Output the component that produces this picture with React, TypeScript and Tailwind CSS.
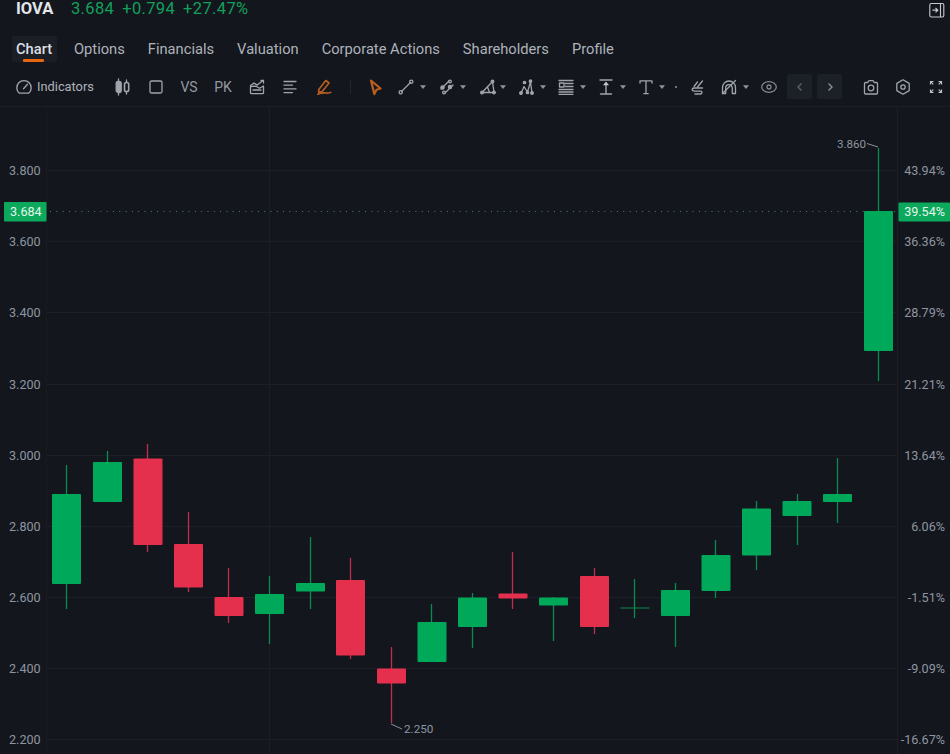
import React from "react";

const G = "#00a85a";
const R = "#e4304c";
const GW = "#0b8a50";
const RW = "#c02e49";

const candles: { c: number; x: number; t: number; b: number; wt: number; wb: number; up: boolean; thin?: boolean }[] = [
  { c: 66.5, x: 52, t: 494, b: 584, wt: 465, wb: 609, up: true },
  { c: 107.5, x: 93, t: 462, b: 502, wt: 451, wb: 502, up: true },
  { c: 147.5, x: 133.5, t: 458.5, b: 545, wt: 444, wb: 552, up: false },
  { c: 188.5, x: 174, t: 544, b: 587.5, wt: 512, wb: 592, up: false },
  { c: 228.5, x: 214.5, t: 597, b: 616, wt: 568, wb: 623, up: false },
  { c: 269.5, x: 255, t: 594, b: 614, wt: 576, wb: 644, up: true },
  { c: 310.5, x: 296, t: 583, b: 591.5, wt: 537, wb: 609, up: true },
  { c: 350.5, x: 336, t: 580, b: 655.5, wt: 558, wb: 659, up: false },
  { c: 391.5, x: 377, t: 668.5, b: 683.5, wt: 647, wb: 723, up: false },
  { c: 431.5, x: 417.5, t: 622, b: 662, wt: 604, wb: 662, up: true },
  { c: 472.5, x: 458, t: 597.5, b: 627, wt: 593, wb: 648, up: true },
  { c: 512.5, x: 498.5, t: 593.5, b: 598.5, wt: 552, wb: 609, up: false },
  { c: 553.5, x: 539, t: 597.5, b: 605.5, wt: 597, wb: 641, up: true },
  { c: 594.5, x: 580, t: 576, b: 627, wt: 568, wb: 634, up: false },
  { c: 634.5, x: 620.5, t: 607.5, b: 608.5, wt: 579, wb: 618, up: true, thin: true },
  { c: 675.5, x: 661, t: 590, b: 616, wt: 583, wb: 647, up: true },
  { c: 715.5, x: 701.5, t: 555, b: 591, wt: 540, wb: 598, up: true },
  { c: 756.5, x: 742, t: 508.5, b: 555.5, wt: 501, wb: 570, up: true },
  { c: 797.5, x: 782.5, t: 501, b: 516, wt: 494, wb: 545, up: true },
  { c: 837.5, x: 823, t: 494, b: 502, wt: 458, wb: 523, up: true },
  { c: 878.5, x: 864, t: 211, b: 351, wt: 148, wb: 381, up: true },
];

const leftAxis: [string, number][] = [
  ["3.800", 171], ["3.600", 242], ["3.400", 313], ["3.200", 385], ["3.000", 456],
  ["2.800", 527], ["2.600", 598], ["2.400", 669], ["2.200", 740],
];
const rightAxis: [string, number][] = [
  ["43.94%", 171], ["36.36%", 242], ["28.79%", 313], ["21.21%", 385], ["13.64%", 456],
  ["6.06%", 527], ["-1.51%", 598], ["-9.09%", 669], ["-16.67%", 740],
];

function Ic({ className, children, orange }: { className: string; children: React.ReactNode; orange?: boolean }) {
  return (
    <svg
      viewBox="0 0 18 18"
      fill="none"
      stroke={orange ? "#bb5f20" : "#a0a5ad"}
      strokeWidth={1.3}
      strokeLinecap="round"
      strokeLinejoin="round"
      className={className}
    >
      {children}
    </svg>
  );
}

function Caret({ className }: { className: string }) {
  return (
    <svg viewBox="0 0 8 6" className={className}>
      <path d="M1 1.2h6L4 5z" fill="#8f949d" />
    </svg>
  );
}

const base = "w-[18px] h-[18px] flex-none";
const car = "w-[8px] h-[6px] flex-none";

export default function App() {
  const tabs = ["Options", "Financials", "Valuation", "Corporate Actions", "Shareholders", "Profile"];
  return (
    <div className="w-[950px] h-[754px] overflow-hidden bg-[#13161d] font-['Roboto',sans-serif] flex flex-col">
      {/* Title row */}
      <div className="h-[19px] flex items-center pl-[16px] pr-[5px] flex-none">
        <span className="text-[16.5px] font-bold text-[#e2e5ea] w-[55px] leading-none">IOVA</span>
        <div className="flex gap-[8px] text-[16.5px] text-[#12a05c] leading-none tracking-[0.35px]">
          <span>3.684</span>
          <span>+0.794</span>
          <span>+27.47%</span>
        </div>
        <svg viewBox="0 0 16 16" fill="none" className="w-[16px] h-[16px] ml-auto" stroke="#c6cad0" strokeWidth={1.1}>
          <rect x="0.8" y="1.5" width="14" height="13.5" rx="1.5" />
          <path d="M11.5 1.5v13.5" />
          <path d="M3.5 8.2h5M6.5 6l2.3 2.2-2.3 2.2" strokeWidth={1.2} />
        </svg>
      </div>

      {/* Tabs */}
      <div className="mt-[17px] pl-[12px] h-[26px] flex items-stretch gap-[15px] text-[14.7px] text-[#aeb3bb] flex-none">
        <div className="relative px-[4px] mr-[-2px] pt-[1px] flex items-center font-medium text-[#dcdfe4] bg-[#1b1e25] rounded-[2px] w-[45px]">
          Chart
          <span className="absolute left-[11px] bottom-0 w-[21px] h-[3px] bg-[#e8670f] rounded-[1px]" />
        </div>
        {tabs.map((t) => (
          <div key={t} className="px-[4px] pt-[1px] flex items-center whitespace-nowrap">
            {t}
          </div>
        ))}
      </div>

      {/* Toolbar */}
      <div className="mt-[12px] h-[25px] flex items-center pl-[15px] flex-none text-[#a0a5ad]">
        <Ic className={base}>
          <path d="M4.3 15.2a7.2 7.2 0 1 1 9.4 0z" />
          <path d="M8.5 10.8l4-4.6" />
        </Ic>
        <span className="ml-[4px] pt-[1px] w-[56px] text-[12.8px] text-[#aeb3bb] whitespace-nowrap">Indicators</span>

        <Ic className={`${base} ml-[20px]`}>
          <path d="M5.5 1v16M13.5 2v14" />
          <rect x="3.2" y="3.5" width="5" height="11" rx="2" fill="#a0a5ad" />
          <rect x="11.5" y="4.5" width="4.2" height="9" rx="1.8" fill="#13161d" strokeWidth={1.6} />
        </Ic>
        <Ic className={`${base} ml-[16px]`}>
          <rect x="3" y="3" width="12" height="12" rx="1.5" />
        </Ic>
        <span className="ml-[15px] w-[18px] text-center text-[14px] leading-none text-[#9499a2]">VS</span>
        <span className="ml-[16px] w-[18px] text-center text-[14px] leading-none text-[#9499a2]">PK</span>
        <Ic className={`${base} ml-[16px]`}>
          <path d="M2.5 8.5v6.2a1 1 0 0 0 1 1h11a1 1 0 0 0 1-1V8l-4 2.2-3.5-2z" />
          <path d="M2.5 7.5l3.5-2.4 3.2 2L15 2.5" />
          <path d="M13 2.5h2.5V5" />
          <path d="M5 12h8" />
        </Ic>
        <Ic className={`${base} ml-[15px]`}>
          <path d="M3 3.5h12M3 7.2h8.5M3 10.9h12M3 14.6h8.5" />
        </Ic>
        <Ic className={`${base} ml-[16px]`} orange>
          <path d="M3.8 11.5L10.8 2.5l3.2 2.5-6.8 8.6-3.6.6z" strokeWidth={1.6} />
          <path d="M2.8 16.2c3-1.2 5-1.6 8-1.2 2 .3 3.5.2 5-.6" strokeWidth={1.6} />
        </Ic>
        <span className="ml-[17px] w-px h-[14px] bg-[#23262e] flex-none" />
        <Ic className={`${base} ml-[15px]`} orange>
          <path d="M5 2.5l9.5 8-4 1.2-2.2 4.3z" strokeWidth={2.2} />
        </Ic>

        <Ic className={`${base} ml-[13px]`}>
          <path d="M4.5 13.5l9-9" />
          <circle cx="3.7" cy="14.3" r="1.6" />
          <circle cx="14.3" cy="3.7" r="1.6" />
        </Ic>
        <Caret className={`${car} ml-[4px]`} />
        <Ic className={`${base} ml-[11px]`}>
          <path d="M3 11l8-8M7 15l8-8" />
          <circle cx="4.5" cy="9.5" r="1.6" fill="#a0a5ad" />
          <circle cx="12" cy="3.5" r="1.4" />
          <circle cx="6" cy="14.5" r="1.4" />
          <circle cx="12" cy="9" r="1.6" fill="#a0a5ad" />
        </Ic>
        <Caret className={`${car} ml-[3px]`} />
        <Ic className={`${base} ml-[12px]`}>
          <path d="M3 14.5h12M3 14.5L13.5 3.5l1.5 11" />
          <path d="M8.5 9l2 5.5" />
          <circle cx="3" cy="14.5" r="1.3" fill="#a0a5ad" />
          <circle cx="13.5" cy="3.5" r="1.3" fill="#a0a5ad" />
          <circle cx="15" cy="14.5" r="1.3" fill="#a0a5ad" />
        </Ic>
        <Caret className={`${car} ml-[2px]`} />
        <Ic className={`${base} ml-[11px]`}>
          <path d="M3 15.5l3-7 3.5 5.5 3-10 1.5 11" />
          <circle cx="3" cy="15" r="1.3" fill="#a0a5ad" />
          <circle cx="6.5" cy="4.5" r="1.2" fill="#a0a5ad" />
          <circle cx="12.5" cy="3.2" r="1.2" fill="#a0a5ad" />
          <circle cx="9.5" cy="14.5" r="1.2" fill="#a0a5ad" />
          <circle cx="14" cy="15" r="1.3" fill="#a0a5ad" />
        </Ic>
        <Caret className={`${car} ml-[3px]`} />
        <Ic className={`${base} ml-[10px]`}>
          <path d="M2 2.5h14M8 5.5h8M8 8.5h8M2 11.5h14M2 14h14M2 16.3h14" />
          <rect x="2.5" y="5" width="4.5" height="4" />
        </Ic>
        <Caret className={`${car} ml-[4px]`} />
        <Ic className={`${base} ml-[10px]`}>
          <path d="M3 2h12M9 7v8M3.5 16h11" strokeWidth={1.4} />
          <path d="M9 3.5l3 3.8H6z" fill="#c4c8ce" stroke="none" />
        </Ic>
        <Caret className={`${car} ml-[4px]`} />
        <Ic className={`${base} ml-[10px]`}>
          <path d="M3 5V2.8h12V5M9 2.8v12.8M6.8 15.6h4.4" />
        </Ic>
        <Caret className={`${car} ml-[3px]`} />
        <span className="ml-[9px] w-[2px] h-[2px] rounded-full bg-[#8b9099] flex-none" />
        <Ic className={`${base} ml-[11px]`}>
          <path d="M6 8.5l3.5-4.5M9.5 9l5-6" />
          <path d="M14.5 10H6.5c-3 0-3 3.2 0 3.2h6c2 0 2 2.8 0 2.8H7" />
        </Ic>
        <Ic className={`${base} ml-[14px]`}>
          <path d="M2.5 15.5V9.5a6.5 6.5 0 0 1 13 0v6h-3.2v-5.5a3.3 3.3 0 0 0-6.6 0v5.5z" />
          <path d="M2.5 15.5L15.5 2.5" />
        </Ic>
        <Caret className={`${car} ml-[4px]`} />
        <Ic className={`${base} ml-[10px]`}>
          <ellipse cx="9" cy="9" rx="7.3" ry="5.3" stroke="#83888f" />
          <circle cx="9" cy="9" r="2" stroke="#83888f" />
        </Ic>
        <div className="ml-[9px] w-[25px] h-[25px] bg-[#1c2027] rounded-[2px] flex items-center justify-center flex-none">
          <svg viewBox="0 0 10 10" className="w-[10px] h-[10px]" fill="none" stroke="#5d626b" strokeWidth={1.4}>
            <path d="M6.5 1.5L3 5l3.5 3.5" />
          </svg>
        </div>
        <div className="ml-[5px] w-[25px] h-[25px] bg-[#1c2027] rounded-[2px] flex items-center justify-center flex-none">
          <svg viewBox="0 0 10 10" className="w-[10px] h-[10px]" fill="none" stroke="#8a8f98" strokeWidth={1.4}>
            <path d="M3.5 1.5L7 5 3.5 8.5" />
          </svg>
        </div>
        <Ic className={`${base} ml-[20px]`}>
          <path d="M3.5 4.5h2.2L7 2.6h4l1.3 1.9h2.2a1 1 0 0 1 1 1v9.5a1 1 0 0 1-1 1h-11a1 1 0 0 1-1-1V5.5a1 1 0 0 1 1-1z" />
          <circle cx="9" cy="10" r="2.8" />
        </Ic>
        <Ic className={`${base} ml-[14px]`}>
          <path d="M9 1.8l6.2 3.6v7.2L9 16.2l-6.2-3.6V5.4z" />
          <circle cx="9" cy="9" r="2.2" />
        </Ic>
        <svg viewBox="0 0 18 18" className={`${base} ml-[15px]`} fill="none" stroke="#bcc0c6" strokeWidth={1.2}>
          <path d="M3.5 6.5V3.5h3M14.5 6.5V3.5h-3M3.5 11.5v3h3M14.5 11.5v3h-3" />
          <path d="M4 4l2.3 2.3M14 4l-2.3 2.3M4 14l2.3-2.3M14 14l-2.3-2.3" />
        </svg>
      </div>

      <div className="mt-[7px] h-px bg-[#1b1e25] flex-none" />

      {/* Chart */}
      <svg viewBox="0 107 950 647" className="w-[950px] h-[647px] flex-none block">
        {leftAxis.map(([, y]) => (
          <line key={y} x1={47} x2={897} y1={y - 0.5} y2={y - 0.5} stroke="#1c1f26" />
        ))}
        <line x1={46.5} x2={46.5} y1={107} y2={754} stroke="#181b22" />
        <line x1={897.5} x2={897.5} y1={107} y2={754} stroke="#1c1f26" />
        <line x1={269.5} x2={269.5} y1={107} y2={754} stroke="#1c1f26" />

        <line x1={50} x2={897} y1={211.5} y2={211.5} stroke="#4f7f74" strokeDasharray="1 5.3" />

        {candles.map((k) => (
          <g key={k.c}>
            <line x1={k.c} x2={k.c} y1={k.wt} y2={k.wb} stroke={k.up ? GW : RW} strokeWidth={1.3} />
            <rect
              x={k.x}
              y={k.t}
              width={29}
              height={k.b - k.t}
              rx={k.thin ? 0 : 1}
              fill={k.up ? (k.thin ? GW : G) : R}
            />
          </g>
        ))}

        <path d="M867 143.5L878 147" stroke="#8b919c" fill="none" />
        <path d="M391 724L402 729" stroke="#8b919c" fill="none" />

        <g fontSize={12} fill="#8f95a0" fontFamily="Roboto, sans-serif">
          <text x={837} y={147.5} fontSize={11.6}>3.860</text>
          <text x={404} y={733} fontSize={11.7}>2.250</text>
          {leftAxis.map(([t, y]) => (
            <text key={t} x={9} y={y + 4} fontSize={12.6}>{t}</text>
          ))}
          {rightAxis.map(([t, y]) => (
            <text key={t} x={945} y={y + 4} textAnchor="end" fontSize={12.6}>{t}</text>
          ))}
        </g>

        <rect x={4} y={202} width={42.5} height={19.5} rx={1} fill="#0ca95c" />
        <text x={10} y={216} fontSize={12.6} fill="#e6f5ec" fontFamily="Roboto, sans-serif">3.684</text>
        <rect x={898.5} y={202.5} width={51.5} height={19} rx={1} fill="#0ca95c" />
        <text x={945} y={216} fontSize={12.6} fill="#e6f5ec" textAnchor="end" fontFamily="Roboto, sans-serif">39.54%</text>
      </svg>
    </div>
  );
}
